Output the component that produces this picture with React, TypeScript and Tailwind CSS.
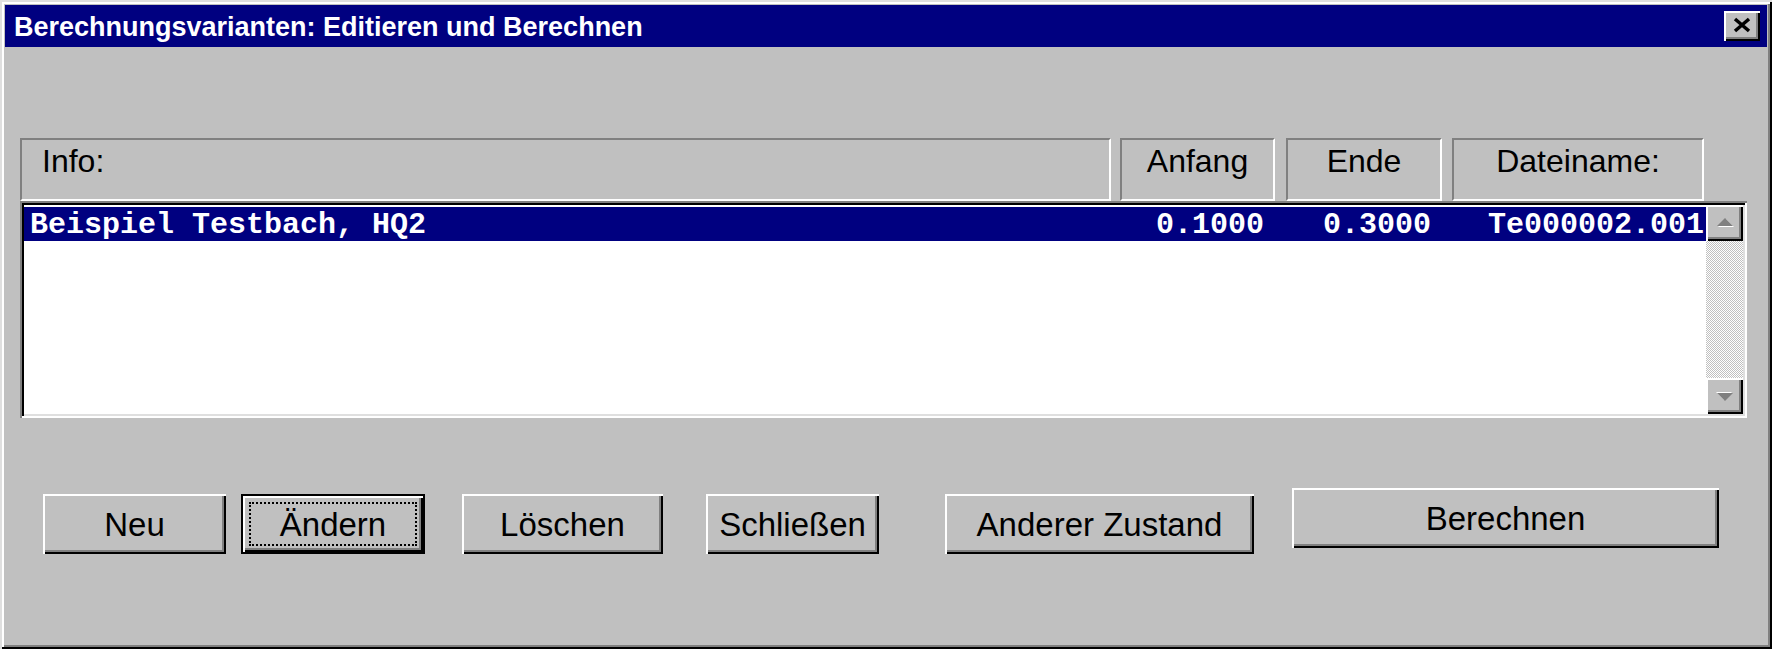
import clsx from 'clsx'

const raised = 'shadow-[inset_2px_2px_0_#fff,inset_-2px_-2px_0_#000,inset_-4px_-4px_0_#808080]'

function CloseButton() {
  return (
    <div className={clsx('flex h-[30px] w-[36px] items-center justify-center bg-[#c0c0c0]', raised)}>
      <svg width="20" height="16" viewBox="0 0 20 16" className="-mt-[2px]">
        <path d="M3 2 L17 14 M17 2 L3 14" stroke="#000" strokeWidth="3.5" />
      </svg>
    </div>
  )
}

function HeaderCell({ label, className }: { label: string; className?: string }) {
  return (
    <div
      className={clsx(
        'h-full border-2 border-t-[#808080] border-r-white border-b-white border-l-[#808080] pt-[3px] text-[32px] leading-[36px]',
        className,
      )}
    >
      {label}
    </div>
  )
}

function ScrollArrow({ down }: { down?: boolean }) {
  return (
    <div className={clsx('flex h-[36px] items-center justify-center bg-[#c0c0c0]', raised)}>
      <svg width="20" height="12" viewBox="0 0 20 12" className={clsx(down && 'rotate-180')}>
        <path d="M3 10 L11 2 L19 10 Z" fill="#fff" />
        <path d="M2 9 L10 1 L18 9 Z" fill="#808080" />
      </svg>
    </div>
  )
}

function Btn({ label, className, def }: { label: string; className: string; def?: boolean }) {
  return (
    <div
      className={clsx(
        'flex h-[60px] items-center justify-center bg-[#c0c0c0] text-[33px] leading-none',
        def
          ? 'p-[8px] shadow-[inset_0_0_0_2px_#000,inset_4px_4px_0_#fff,inset_-4px_-4px_0_#000,inset_-6px_-6px_0_#808080]'
          : raised,
        className,
      )}
    >
      {def ? (
        <div className="flex h-full w-full items-center justify-center border-2 border-dotted border-black">
          {label}
        </div>
      ) : (
        label
      )}
    </div>
  )
}

export default function App() {
  return (
    <div className="flex h-[649px] w-[1772px] flex-col bg-[#c0c0c0] p-[5px] font-[family-name:'Liberation_Sans',Arial,sans-serif] text-black shadow-[inset_2px_2px_0_#dfdfdf,inset_-2px_-2px_0_#000,inset_4px_4px_0_#fff,inset_-4px_-4px_0_#808080]">
      <div className="flex h-[42px] items-center justify-between bg-[#000080] pl-[9px] pr-[7px]">
        <span className="pt-[2px] text-[27px] font-bold leading-none text-white">
          Berechnungsvarianten: Editieren und Berechnen
        </span>
        <CloseButton />
      </div>

      <div className="flex flex-col pl-[15px] pt-[91px]">
        <div className="flex h-[63px]">
          <HeaderCell label="Info:" className="w-[1091px] pl-[20px]" />
          <HeaderCell label="Anfang" className="ml-[9px] w-[155px] text-center" />
          <HeaderCell label="Ende" className="ml-[11px] w-[156px] text-center" />
          <HeaderCell label="Dateiname:" className="ml-[10px] w-[252px] text-center" />
        </div>

        <div className="flex h-[217px] w-[1727px] bg-white p-[4px] shadow-[inset_2px_2px_0_#808080,inset_-2px_-2px_0_#fff,inset_4px_4px_0_#000,inset_-4px_-4px_0_#dfdfdf]">
          <div className="flex flex-1 flex-col pt-[2px]">
            <div className="flex h-[34px] items-center bg-[#000080] pt-[2px] font-[family-name:'Liberation_Mono',monospace] text-[30px] font-bold leading-none whitespace-pre text-white">
              <span className="flex-1 pl-[6px]">Beispiel Testbach, HQ2</span>
              <span className="w-[143px] text-right">0.1000</span>
              <span className="w-[167px] text-right">0.3000</span>
              <span className="w-[273px] text-right">Te000002.001</span>
              <span className="w-[2px]" />
            </div>
          </div>
          <div className="flex w-[37px] flex-col">
            <ScrollArrow />
            <div className="flex-1 bg-[repeating-conic-gradient(#c0c0c0_0_25%,#fff_0_50%)] bg-[length:2px_2px]" />
            <ScrollArrow down />
          </div>
        </div>

        <div className="mt-[70px] flex items-start">
          <Btn label="Neu" className="mt-[6px] ml-[23px] w-[183px]" />
          <Btn label="Ändern" def className="mt-[6px] ml-[15px] w-[184px]" />
          <Btn label="Löschen" className="mt-[6px] ml-[37px] w-[201px]" />
          <Btn label="Schließen" className="mt-[6px] ml-[43px] w-[173px]" />
          <Btn label="Anderer Zustand" className="mt-[6px] ml-[66px] w-[309px]" />
          <Btn label="Berechnen" className="ml-[38px] w-[427px]" />
        </div>
      </div>
    </div>
  )
}
